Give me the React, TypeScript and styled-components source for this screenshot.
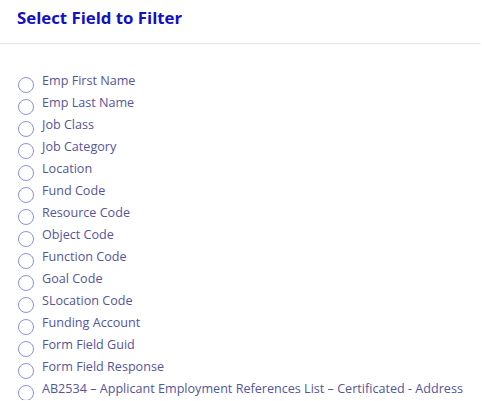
import React from "react";
import styled, { createGlobalStyle } from "styled-components";

const Global = createGlobalStyle`
  html, body { margin: 0; padding: 0; background: #fff; }
  body { font-family: "Open Sans", "Noto Sans", sans-serif; }
`;

const Panel = styled.div`
  width: 482px;
  background: #fff;
`;

const Header = styled.div`
  height: 44px;
  box-sizing: border-box;
  padding: 7px 0 0 17px;
  border-bottom: 1px solid #e6e6e6;
  margin-right: 1px;
`;

const Title = styled.h2`
  margin: 0;
  font-family: "Open Sans", sans-serif;
  font-size: 16.8px;
  font-weight: 700;
  color: #1010c8;
  line-height: 22px;
`;

const List = styled.ul`
  list-style: none;
  margin: 0;
  padding: 26px 0 0 18px;
`;

const Row = styled.li`
  display: flex;
  align-items: flex-start;
  height: 22px;
  gap: 8px;
`;

const Radio = styled.span`
  width: 14px;
  height: 14px;
  margin-top: 7px;
  border: 1.3px solid #8a8ff0;
  border-radius: 50%;
  flex: none;
`;

const Label = styled.span`
  font-size: 12.6px;
  line-height: 22px;
  color: #55559a;
  white-space: nowrap;
`;

const fields = [
  "Emp First Name",
  "Emp Last Name",
  "Job Class",
  "Job Category",
  "Location",
  "Fund Code",
  "Resource Code",
  "Object Code",
  "Function Code",
  "Goal Code",
  "SLocation Code",
  "Funding Account",
  "Form Field Guid",
  "Form Field Response",
  "AB2534 – Applicant Employment References List – Certificated - Address",
];

export default function App() {
  return (
    <Panel>
      <Global />
      <Header>
        <Title>Select Field to Filter</Title>
      </Header>
      <List>
        {fields.map((f) => (
          <Row key={f}>
            <Radio />
            <Label>{f}</Label>
          </Row>
        ))}
      </List>
    </Panel>
  );
}
